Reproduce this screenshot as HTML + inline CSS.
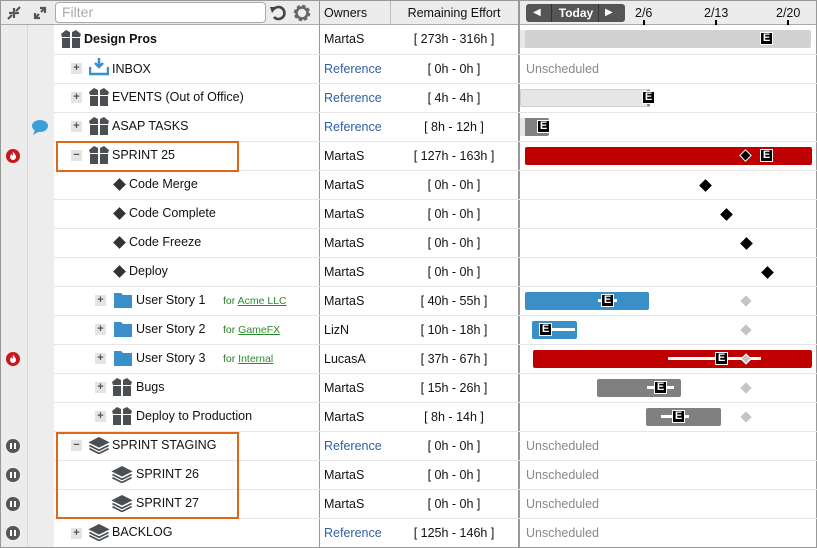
<!DOCTYPE html>
<html><head><meta charset="utf-8">
<style>
*{margin:0;padding:0;box-sizing:border-box}
body{width:817px;height:548px;overflow:hidden;background:#fff;font-family:"Liberation Sans",sans-serif;font-size:12.5px;color:#111;position:relative}
.a{position:absolute}
.t{position:absolute;white-space:nowrap;line-height:16px}
.ln{position:absolute;left:54px;right:0;height:1px;background:#e6e6e6}
.ex{position:absolute;width:11px;height:11px;background:#e4e4e4;color:#555;font-size:11px;line-height:10px;text-align:center;font-weight:bold}
.ref{color:#2f5fa8}
.ef{position:absolute;left:390px;width:128px;text-align:center;line-height:16px}
.ow{position:absolute;left:324px;line-height:16px}
.un{position:absolute;left:526px;color:#888;line-height:16px}
.E{position:absolute;width:13px;height:13px;background:#000;color:#fff;font-weight:bold;font-size:11px;line-height:11px;text-align:center;border:1px solid #fff}
.bar{position:absolute;height:18px;border-radius:2px}
.dm{position:absolute;width:9px;height:9px;background:#000;transform:rotate(45deg)}
.gd{position:absolute;width:8px;height:8px;background:#c4c4c4;transform:rotate(45deg)}
.wl{position:absolute;height:3px;background:#fff}
.pz{position:absolute;left:6px;width:14px;height:14px;border-radius:50%;background:#555}
.pz:before,.pz:after{content:"";position:absolute;top:4px;width:2px;height:6px;background:#fff}
.pz:before{left:4px}.pz:after{left:8px}
.fire{position:absolute;left:6px;width:14px;height:14px;border-radius:50%;background:#c8171d}
.for{position:absolute;left:223px;font-size:10.5px;color:#2a7a2a;line-height:16px}
.for u{color:#2a8a2a}
.ob{position:absolute;border:2px solid #e0661d}
</style></head><body>
<div class="a" style="left:0;top:0;width:27px;height:548px;background:#ececec"></div>
<div class="a" style="left:27px;top:0;width:27px;height:548px;background:#ededed;border-left:1px solid #d8d8d8"></div>
<div class="a" style="left:0;top:0;width:817px;height:25px;background:#ececec;border-bottom:1px solid #aaa"></div>
<div class="a" style="left:319px;top:0;width:1px;height:548px;background:#999"></div>
<div class="a" style="left:390px;top:0;width:1px;height:25px;background:#bbb"></div>
<div class="a" style="left:518px;top:0;width:2px;height:548px;background:#999"></div>
<div class="a" style="left:0;top:0;width:817px;height:548px;border:1px solid #999"></div>

<svg class="a" style="left:6px;top:5px" width="16" height="16" viewBox="0 0 16 16"><path d="M2 14 L6 10 M3 8 H8 V13 M14 2 L10 6 M8 3 V8 H13" stroke="#555" stroke-width="2.2" fill="none"/></svg>
<svg class="a" style="left:32px;top:5px" width="16" height="16" viewBox="0 0 16 16"><path d="M3 13 L7 9 M3 8 V13 H8 M13 3 L9 7 M8 3 H13 V8" stroke="#555" stroke-width="2.2" fill="none"/></svg>
<div class="a" style="left:55px;top:2px;width:211px;height:21px;background:#fff;border:1px solid #aaa;border-radius:4px;color:#aaa;font-size:14px;line-height:19px;padding-left:6px">Filter</div>
<svg class="a" style="left:269px;top:4px" width="18" height="18" viewBox="0 0 18 18"><path d="M5 5 A6 6 0 1 1 5 13" stroke="#444" stroke-width="2.6" fill="none"/><path d="M1 3 L8 3 L3 9 Z" fill="#444"/></svg>
<svg class="a" style="left:292px;top:3px" width="20" height="20" viewBox="0 0 20 20"><circle cx="10" cy="10" r="6.5" fill="none" stroke="#666" stroke-width="3.5" stroke-dasharray="3 2.1"/><circle cx="10" cy="10" r="5.5" fill="none" stroke="#666" stroke-width="2.6"/></svg>
<div class="t" style="left:324px;top:5px">Owners</div>
<div class="t" style="left:390px;width:128px;text-align:center;top:5px">Remaining Effort</div>
<div class="a" style="left:526px;top:4px;width:99px;height:18px;background:#555;border-radius:3px"></div>
<div class="a" style="left:551px;top:4px;width:1px;height:18px;background:#333"></div>
<div class="a" style="left:598px;top:4px;width:1px;height:18px;background:#333"></div>
<div class="t" style="left:533px;top:5px;color:#fff;font-size:10px">◀</div>
<div class="t" style="left:555px;top:5px;color:#fff;font-weight:bold;font-size:12px;width:42px;text-align:center">Today</div>
<div class="t" style="left:605px;top:5px;color:#fff;font-size:10px">▶</div>
<div class="t" style="left:635px;top:5px">2/6</div>
<div class="t" style="left:704px;top:5px">2/13</div>
<div class="t" style="left:776px;top:5px">2/20</div>
<div class="a" style="left:643px;top:20px;width:2px;height:5px;background:#000"></div>
<div class="a" style="left:715px;top:20px;width:2px;height:5px;background:#000"></div>
<div class="a" style="left:787px;top:20px;width:2px;height:5px;background:#000"></div>

<div class="ln" style="top:54px"></div><div class="ln" style="top:83px"></div><div class="ln" style="top:112px"></div><div class="ln" style="top:141px"></div><div class="ln" style="top:170px"></div><div class="ln" style="top:199px"></div><div class="ln" style="top:228px"></div><div class="ln" style="top:257px"></div><div class="ln" style="top:286px"></div><div class="ln" style="top:315px"></div><div class="ln" style="top:344px"></div><div class="ln" style="top:373px"></div><div class="ln" style="top:402px"></div><div class="ln" style="top:431px"></div><div class="ln" style="top:460px"></div><div class="ln" style="top:489px"></div><div class="ln" style="top:518px"></div>

<svg width="0" height="0" style="position:absolute"><defs>
<symbol id="box" viewBox="0 0 20 18"><path d="M0 4 L5 0 L9 2 L9 7 L1 7 Z M20 4 L15 0 L11 2 L11 7 L19 7 Z M1 8 H9 V18 H1 Z M11 8 H19 V18 H11 Z" fill="#4b4f54"/></symbol>
<symbol id="stk" viewBox="0 0 20 16"><path d="M10 0 L20 5 L10 10 L0 5 Z" fill="#4b4f54"/><path d="M1 8 L10 12.5 L19 8 M1 11 L10 15.5 L19 11" stroke="#4b4f54" stroke-width="1.6" fill="none"/></symbol>
<symbol id="fld" viewBox="0 0 18 15"><path d="M0 0 H7 L9 2 H18 V15 H0 Z" fill="#3a8fc9"/></symbol>
<symbol id="flm" viewBox="0 0 14 14"><circle cx="7" cy="7" r="7" fill="#c8171d"/><path d="M7 2.5 C8 4.5 10 5.5 10 8 A3 3 0 0 1 4 8 C4 6.5 5 6 5.5 5 C6 6.2 6.5 6.5 7 6.5 C7 5 6.5 4 7 2.5 Z" fill="#fff"/></symbol>
</defs></svg>

<svg class="a" style="left:61px;top:30px" width="20" height="18"><use href="#box"/></svg>
<div class="t" style="left:84px;top:31px;font-weight:bold">Design Pros</div>
<div class="ow" style="top:31px">MartaS</div><div class="ef" style="top:31px">[ 273h - 316h ]</div>
<div class="bar" style="left:520px;width:291px;top:30px;background:#d2d2d2"></div>
<div class="a" style="left:520px;width:5px;top:30px;height:18px;background:#e8e8e8"></div>
<div class="E" style="left:760px;top:32px">E</div>

<div class="ex" style="left:71px;top:63px">+</div>
<svg class="a" style="left:89px;top:58px" width="20" height="18" viewBox="0 0 20 18"><path d="M10 0 V9 M6 5 L10 9 L14 5" stroke="#3a8fc9" stroke-width="2.5" fill="none"/><path d="M1 9 V16 H19 V9" stroke="#3a8fc9" stroke-width="2.5" fill="none"/></svg>
<div class="t" style="left:112px;top:61px">INBOX</div>
<div class="ow ref" style="top:61px">Reference</div><div class="ef" style="top:61px">[ 0h - 0h ]</div>
<div class="un" style="top:61px">Unscheduled</div>

<div class="ex" style="left:71px;top:92px">+</div>
<svg class="a" style="left:89px;top:88px" width="20" height="18"><use href="#box"/></svg>
<div class="t" style="left:112px;top:89px">EVENTS (Out of Office)</div>
<div class="ow ref" style="top:90px">Reference</div><div class="ef" style="top:90px">[ 4h - 4h ]</div>
<div class="bar" style="left:520px;width:130px;top:89px;background:#e6e6e6;border:1px solid #d0d0d0;border-right:3px solid #888"></div>
<div class="E" style="left:642px;top:91px">E</div>

<svg class="a" style="left:31px;top:119px" width="18" height="16" viewBox="0 0 18 16"><ellipse cx="9" cy="7" rx="8" ry="6" fill="#3a9fd8"/><path d="M4 11 L2 16 L9 12 Z" fill="#3a9fd8"/></svg>
<div class="ex" style="left:71px;top:121px">+</div>
<svg class="a" style="left:89px;top:117px" width="20" height="18"><use href="#box"/></svg>
<div class="t" style="left:112px;top:118px">ASAP TASKS</div>
<div class="ow ref" style="top:119px">Reference</div><div class="ef" style="top:119px">[ 8h - 12h ]</div>
<div class="bar" style="left:520px;width:29px;top:118px;background:#808080"></div>
<div class="a" style="left:520px;width:5px;top:118px;height:18px;background:#e6e6e6"></div>
<div class="E" style="left:537px;top:120px">E</div>

<svg class="a" style="left:6px;top:149px" width="14" height="14"><use href="#flm"/></svg>
<div class="ex" style="left:71px;top:150px">−</div>
<svg class="a" style="left:89px;top:146px" width="20" height="18"><use href="#box"/></svg>
<div class="t" style="left:112px;top:147px">SPRINT 25</div>
<div class="ow" style="top:148px">MartaS</div><div class="ef" style="top:148px">[ 127h - 163h ]</div>
<div class="bar" style="left:525px;width:287px;top:147px;background:#c00000"></div>
<div class="dm" style="left:741px;top:151px;border:1px solid #fff"></div>
<div class="E" style="left:760px;top:149px">E</div>

<div class="dm" style="left:115px;top:180px;background:#333"></div><div class="t" style="left:129px;top:176px">Code Merge</div>
<div class="ow" style="top:177px">MartaS</div><div class="ef" style="top:177px">[ 0h - 0h ]</div><div class="dm" style="left:701px;top:181px"></div>
<div class="dm" style="left:115px;top:209px;background:#333"></div><div class="t" style="left:129px;top:205px">Code Complete</div>
<div class="ow" style="top:206px">MartaS</div><div class="ef" style="top:206px">[ 0h - 0h ]</div><div class="dm" style="left:722px;top:210px"></div>
<div class="dm" style="left:115px;top:238px;background:#333"></div><div class="t" style="left:129px;top:234px">Code Freeze</div>
<div class="ow" style="top:235px">MartaS</div><div class="ef" style="top:235px">[ 0h - 0h ]</div><div class="dm" style="left:742px;top:239px"></div>
<div class="dm" style="left:115px;top:267px;background:#333"></div><div class="t" style="left:129px;top:263px">Deploy</div>
<div class="ow" style="top:264px">MartaS</div><div class="ef" style="top:264px">[ 0h - 0h ]</div><div class="dm" style="left:763px;top:268px"></div>

<div class="ex" style="left:95px;top:295px">+</div>
<svg class="a" style="left:114px;top:293px" width="18" height="15"><use href="#fld"/></svg>
<div class="t" style="left:136px;top:292px">User Story 1</div><div class="for" style="top:293px">for <u>Acme LLC</u></div>
<div class="ow" style="top:293px">MartaS</div><div class="ef" style="top:293px">[ 40h - 55h ]</div>
<div class="bar" style="left:525px;width:124px;top:292px;background:#3a8fc9"></div>
<div class="wl" style="left:598px;width:19px;top:299px"></div><div class="E" style="left:601px;top:294px">E</div>
<div class="gd" style="left:742px;top:297px"></div>

<div class="ex" style="left:95px;top:324px">+</div>
<svg class="a" style="left:114px;top:322px" width="18" height="15"><use href="#fld"/></svg>
<div class="t" style="left:136px;top:321px">User Story 2</div><div class="for" style="top:322px">for <u>GameFX</u></div>
<div class="ow" style="top:322px">LizN</div><div class="ef" style="top:322px">[ 10h - 18h ]</div>
<div class="bar" style="left:532px;width:45px;top:321px;background:#3a8fc9"></div>
<div class="wl" style="left:545px;width:30px;top:328px"></div><div class="E" style="left:539px;top:323px">E</div>
<div class="gd" style="left:742px;top:326px"></div>

<svg class="a" style="left:6px;top:352px" width="14" height="14"><use href="#flm"/></svg>
<div class="ex" style="left:95px;top:353px">+</div>
<svg class="a" style="left:114px;top:351px" width="18" height="15"><use href="#fld"/></svg>
<div class="t" style="left:136px;top:350px">User Story 3</div><div class="for" style="top:351px">for <u>Internal</u></div>
<div class="ow" style="top:351px">LucasA</div><div class="ef" style="top:351px">[ 37h - 67h ]</div>
<div class="bar" style="left:533px;width:279px;top:350px;background:#c00000"></div>
<div class="wl" style="left:668px;width:93px;top:357px"></div><div class="E" style="left:715px;top:352px">E</div>
<div class="gd" style="left:742px;top:355px;border:1px solid #fff"></div>

<div class="ex" style="left:95px;top:382px">+</div>
<svg class="a" style="left:112px;top:378px" width="20" height="18"><use href="#box"/></svg>
<div class="t" style="left:136px;top:379px">Bugs</div>
<div class="ow" style="top:380px">MartaS</div><div class="ef" style="top:380px">[ 15h - 26h ]</div>
<div class="bar" style="left:597px;width:84px;top:379px;background:#808080"></div>
<div class="wl" style="left:647px;width:27px;top:386px"></div><div class="E" style="left:654px;top:381px">E</div>
<div class="gd" style="left:742px;top:384px"></div>

<div class="ex" style="left:95px;top:411px">+</div>
<svg class="a" style="left:112px;top:407px" width="20" height="18"><use href="#box"/></svg>
<div class="t" style="left:136px;top:408px">Deploy to Production</div>
<div class="ow" style="top:409px">MartaS</div><div class="ef" style="top:409px">[ 8h - 14h ]</div>
<div class="bar" style="left:646px;width:75px;top:408px;background:#808080"></div>
<div class="wl" style="left:661px;width:28px;top:415px"></div><div class="E" style="left:672px;top:410px">E</div>
<div class="gd" style="left:742px;top:413px"></div>

<div class="pz" style="top:439px"></div>
<div class="ex" style="left:71px;top:440px">−</div>
<svg class="a" style="left:88px;top:437px" width="22" height="17"><use href="#stk"/></svg>
<div class="t" style="left:112px;top:437px">SPRINT STAGING</div>
<div class="ow ref" style="top:438px">Reference</div><div class="ef" style="top:438px">[ 0h - 0h ]</div>
<div class="un" style="top:438px">Unscheduled</div>

<div class="pz" style="top:468px"></div>
<svg class="a" style="left:111px;top:466px" width="22" height="17"><use href="#stk"/></svg>
<div class="t" style="left:136px;top:466px">SPRINT 26</div>
<div class="ow" style="top:467px">MartaS</div><div class="ef" style="top:467px">[ 0h - 0h ]</div>
<div class="un" style="top:467px">Unscheduled</div>

<div class="pz" style="top:497px"></div>
<svg class="a" style="left:111px;top:495px" width="22" height="17"><use href="#stk"/></svg>
<div class="t" style="left:136px;top:495px">SPRINT 27</div>
<div class="ow" style="top:496px">MartaS</div><div class="ef" style="top:496px">[ 0h - 0h ]</div>
<div class="un" style="top:496px">Unscheduled</div>

<div class="pz" style="top:526px"></div>
<div class="ex" style="left:71px;top:528px">+</div>
<svg class="a" style="left:88px;top:524px" width="22" height="17"><use href="#stk"/></svg>
<div class="t" style="left:112px;top:524px">BACKLOG</div>
<div class="ow ref" style="top:525px">Reference</div><div class="ef" style="top:525px">[ 125h - 146h ]</div>
<div class="un" style="top:525px">Unscheduled</div>

<div class="ob" style="left:56px;top:141px;width:183px;height:31px"></div>
<div class="ob" style="left:56px;top:432px;width:183px;height:87px"></div>
</body></html>
